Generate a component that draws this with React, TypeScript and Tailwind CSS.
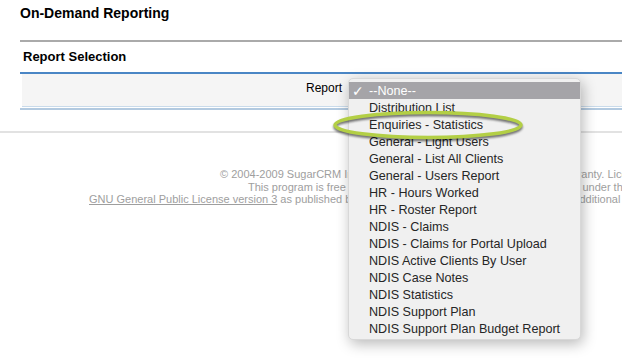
import React from "react";

const items = [
  "Distribution List",
  "Enquiries - Statistics",
  "General - Light Users",
  "General - List All Clients",
  "General - Users Report",
  "HR - Hours Worked",
  "HR - Roster Report",
  "NDIS - Claims",
  "NDIS - Claims for Portal Upload",
  "NDIS Active Clients By User",
  "NDIS Case Notes",
  "NDIS Statistics",
  "NDIS Support Plan",
  "NDIS Support Plan Budget Report",
];

export default function App() {
  return (
    <div className="relative w-[622px] h-[360px] overflow-hidden bg-white font-['Liberation_Sans',Arial,sans-serif] text-black">
      <div className="pl-5">
        <h1 className="pt-[5px] h-[40px] text-[14px] leading-4 font-bold">On-Demand Reporting</h1>
        <div className="h-[2px] bg-[#aaaaaa]" />
        <div className="pl-[3px] h-[30px] flex items-center text-[13px] font-bold">Report Selection</div>
        <div className="h-[2px] bg-[#4a86c5]" />
        <div className="ml-[2px] h-[33px] bg-[#f5f5f5] border-b border-[#c9dbeb] flex justify-end pr-[280px] pt-[7px]">
          <span className="text-[12px] leading-[14px]">Report</span>
        </div>
        <div className="mt-px h-[2px] bg-[#b3cae0]" />
      </div>
      <div className="mt-[21px] h-[2px] bg-[#e2e2e2]" />
      <div className="mt-[35px] text-[11px] leading-[12.5px] text-[#9e9e9e] whitespace-nowrap">
        <div className="ml-[220px]">© 2004-2009 SugarCRM Inc. The Program is provided AS IS, without warranty. Licensed under GPLv3.</div>
        <div className="ml-[248px]">This program is free software; you can redistribute it and/or modify it under the terms of the</div>
        <div className="ml-[89px]">
          <span className="underline">GNU General Public License version 3</span> as published by the Free Software Foundation including the additional permission set forth in the source code header.
        </div>
      </div>

      <div className="absolute left-[348px] top-[78px] w-[233px] h-[262px] rounded-[5px] bg-[#f0f0f0] border border-[#d8d8d8] shadow-[2px_4px_14px_rgba(0,0,0,0.28)] pt-[3px] text-[12.6px] text-[#262626]">
        <div className="h-[17px] bg-[#a5a4a8] text-white flex items-center pt-px">
          <span className="w-[20px] pl-[3px] text-[14px] leading-none font-['DejaVu_Sans',sans-serif]">✓</span>
          <span>--None--</span>
        </div>
        {items.map((t) => (
          <div key={t} className="h-[17px] flex items-center pt-px pl-[20px] whitespace-nowrap">
            {t}
          </div>
        ))}
      </div>

      <svg className="absolute left-[328px] top-[105px] drop-shadow-[0_2px_1px_rgba(0,0,0,0.55)]" width="205" height="40" viewBox="0 0 205 40">
        <ellipse cx="100" cy="20" rx="93" ry="12.5" fill="none" stroke="#b3cf45" strokeWidth="3.5" />
      </svg>
    </div>
  );
}
